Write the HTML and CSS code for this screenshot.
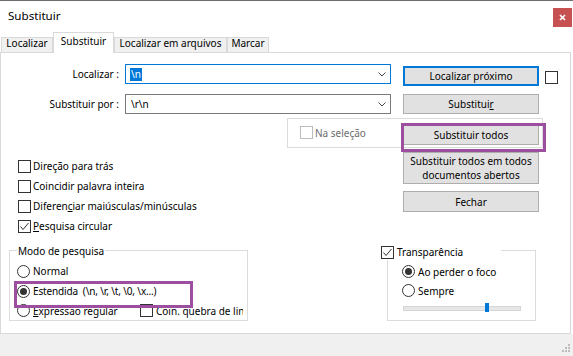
FILE: index.html
```html
<!DOCTYPE html>
<html lang="pt">
<head>
<meta charset="utf-8">
<title>Substituir</title>
<link rel="stylesheet" href="styles.css">
</head>
<body>
<div class="window">
  <div class="titlebar">
    <span class="title">Substituir</span>
    <span class="close"><svg width="7" height="7" viewBox="0 0 7 7"><path d="M1 1L6 6M6 1L1 6" stroke="#fff" stroke-width="1.7"/></svg></span>
  </div>
  <div class="tabs">
    <div class="tab t1">Localizar</div>
    <div class="tab t2 active">Substituir</div>
    <div class="tab t3">Localizar em arquivos</div>
    <div class="tab t4">Marcar</div>
  </div>
  <div class="panel">
    <div class="field-row first">
      <span class="field-label">Localizar :</span>
      <div class="combo focus"><span class="combo-text"><span class="sel">\n</span></span><svg class="chev" width="8" height="5" viewBox="0 0 8 5"><polyline points="0.5,0.5 4,4 7.5,0.5" fill="none" stroke="#444" stroke-width="1"/></svg></div>
      <div class="btn default">Localizar próximo</div>
      <span class="check side"></span>
    </div>
    <div class="field-row second">
      <span class="field-label">Substituir por :</span>
      <div class="combo"><span class="combo-text">\r\n</span><svg class="chev" width="8" height="5" viewBox="0 0 8 5"><polyline points="0.5,0.5 4,4 7.5,0.5" fill="none" stroke="#444" stroke-width="1"/></svg></div>
      <div class="btn">Substitui<u>r</u></div>
    </div>
    <div class="scope">
      <span class="check disabled"></span>
      <span class="scope-label">Na seleção</span>
      <div class="btn marked">Substituir todos</div>
    </div>
    <div class="mid">
      <div class="options">
        <div class="opt"><span class="check"></span><span class="opt-text">Direção para trás</span></div>
        <div class="opt"><span class="check"></span><span class="opt-text">Coincidir palavra inteira</span></div>
        <div class="opt"><span class="check"></span><span class="opt-text">Diferen<u>c</u>iar maiúsculas/minúsculas</span></div>
        <div class="opt"><span class="check checked"><svg width="11" height="11" viewBox="0 0 11 11"><polyline points="1.5,5.5 4,8.5 9.5,2" fill="none" stroke="#333" stroke-width="1"/></svg></span><span class="opt-text"><u>P</u>esquisa circular</span></div>
      </div>
      <div class="actions">
        <div class="btn tall">Substituir todos em todos<br>documentos abertos</div>
        <div class="btn close-btn">Fechar</div>
      </div>
    </div>
    <div class="groups">
      <div class="group mode">
        <div class="legend">Modo de pesquisa</div>
        <div class="radio-row r1"><span class="radio"></span><span class="opt-text">Normal</span></div>
        <div class="radio-row r2 marked-row"><span class="radio on"></span><span class="opt-text ext">Estendida&nbsp; (\n, \r, \t, \0, \x...)</span></div>
        <div class="radio-row r3"><span class="radio-part"><span class="radio"></span><span class="opt-text"><u>E</u>xpressão regular</span></span><span class="check"></span><span class="opt-text">Coin. quebra de linha</span></div>
      </div>
      <div class="group transp">
        <div class="tlegend"><span class="check checked"><svg width="11" height="11" viewBox="0 0 11 11"><polyline points="1.5,5.5 4,8.5 9.5,2" fill="none" stroke="#333" stroke-width="1"/></svg></span><span class="opt-text">Transparência</span></div>
        <div class="radio-row t-r1"><span class="radio on"></span><span class="opt-text">Ao perder o foco</span></div>
        <div class="radio-row t-r2"><span class="radio"></span><span class="opt-text">Sempre</span></div>
        <div class="slider"><span class="thumb"></span></div>
      </div>
    </div>
  </div>
  <div class="footer">
    <svg class="grip" width="9" height="9" viewBox="0 0 9 9" fill="#bdbdbd"><rect x="6" y="0" width="2" height="2"/><rect x="3" y="3" width="2" height="2"/><rect x="6" y="3" width="2" height="2"/><rect x="0" y="6" width="2" height="2"/><rect x="3" y="6" width="2" height="2"/><rect x="6" y="6" width="2" height="2"/></svg>
  </div>
</div>
</body>
</html>
```

FILE: styles.css
```css
* { box-sizing: border-box; }
html, body { margin: 0; padding: 0; }
body {
  width: 573px;
  height: 356px;
  overflow: hidden;
  background: #fff;
  font-family: "Noto Sans", "Open Sans", sans-serif;
  font-size: 10px;
  color: #000;
}
u { text-decoration: underline; text-underline-offset: 1px; }
.window { display: flex; flex-direction: column; height: 356px; }

.titlebar {
  height: 32px;
  border-top: 1px solid #6e6e6e;
  display: flex;
  align-items: flex-start;
  justify-content: space-between;
}
.title { margin: 6px 0 0 8px; line-height: 18px; font-size: 11.6px; }
.close {
  margin: 7px 1px 0 0;
  width: 19px;
  height: 19px;
  background: #c75050;
  display: flex;
  align-items: center;
  justify-content: center;
}

.tabs {
  height: 20px;
  display: flex;
  align-items: flex-end;
  padding-left: 1px;
}
.tab {
  height: 15px;
  border: 1px solid #d9d9d9;
  border-bottom: 0;
  background: #f0f0f0;
  text-align: center;
  line-height: 11px;
  white-space: nowrap;
}
.tab.t1 { width: 52px; }
.tab.t2 { width: 61px; }
.tab.t3 { width: 113px; }
.tab.t4 { width: 42px; }
.tab.active {
  height: 21px;
  margin-bottom: -1px;
  background: #fff;
  line-height: 16px;
  position: relative;
  z-index: 1;
}

.panel {
  width: 571px;
  height: 282px;
  border: 1px solid #d9d9d9;
}

.field-row { display: flex; align-items: flex-start; height: 20px; }
.field-row.first { margin-top: 11px; }
.field-row.second { margin-top: 10px; }
.field-label {
  width: 118px;
  text-align: right;
  line-height: 20px;
  white-space: nowrap;
}
.combo {
  margin-left: 6px;
  width: 266px;
  height: 20px;
  border: 1px solid #7a7a7a;
  display: flex;
  align-items: center;
  justify-content: space-between;
  padding: 0 4px;
}
.combo.focus { border-color: #0078d7; }
.combo-text { line-height: 18px; white-space: nowrap; }
.second .combo-text { padding-left: 1px; }
.sel {
  display: inline-block;
  background: #0078d7;
  color: #fff;
  line-height: 13px;
  padding: 0 1px;
}

.btn {
  width: 136px;
  height: 20px;
  background: #e1e1e1;
  border: 1px solid #adadad;
  display: flex;
  align-items: center;
  justify-content: center;
  text-align: center;
  line-height: 14px;
  white-space: nowrap;
}
.field-row .btn { margin-left: 12px; }
.first .btn { margin-top: 2px; }
.btn.default { border: 2px solid #0078d7; }

.check {
  width: 13px;
  height: 13px;
  border: 1px solid #333;
  background: #fff;
  flex: none;
  display: flex;
  align-items: center;
  justify-content: center;
}
.check.side { margin: 7px 0 0 6px; }
.check.disabled { border-color: #bcbcbc; }

.scope {
  margin: 4px 0 0 286px;
  width: 256px;
  height: 30px;
  border: 1px solid #dcdcdc;
  display: flex;
  align-items: flex-start;
}
.scope .check { margin: 7px 0 0 12px; }
.scope-label { margin: 4px 0 0 2px; line-height: 20px; color: #6d6d6d; }
.btn.marked {
  margin: 5px 3px 0 auto;
  height: 21px;
  position: relative;
}
.btn.marked::after {
  content: "";
  position: absolute;
  left: -3px;
  top: -2px;
  width: 139px;
  height: 23px;
  border: 3px solid #9c4f9f;
}

.mid { display: flex; }
.options { width: 402px; padding: 8px 0 0 17px; }
.opt { display: flex; align-items: center; height: 20px; }
.opt-text { margin-left: 2px; line-height: 20px; white-space: nowrap; }
.actions { width: 136px; padding-top: 4px; }
.btn.tall { height: 32px; }
.btn.close-btn { margin-top: 7px; height: 21px; }

.groups { display: flex; margin-top: 14px; padding-left: 8px; gap: 139px; }
.group {
  height: 71px;
  border: 1px solid #dcdcdc;
}
.group.mode { width: 239px; }
.group.transp { width: 149px; }
.legend {
  width: fit-content;
  margin: -8px 0 0 7px;
  padding: 0 1px;
  background: #fff;
  line-height: 16px;
}
.radio-row { display: flex; align-items: center; height: 20px; margin-left: 7px; }
.mode .r1 { margin-top: 2px; }
.mode .r3 { height: 19px; margin-right: 4px; overflow: hidden; }
.radio-part { display: flex; align-items: center; width: 123px; flex: none; }
.radio {
  width: 13px;
  height: 13px;
  border: 1px solid #333;
  border-radius: 50%;
  background: #fff;
  flex: none;
  display: flex;
  align-items: center;
  justify-content: center;
}
.radio-row .opt-text { margin-left: 3px; }
.radio-row .opt-text.ext { letter-spacing: -0.15px; }
.radio.on::before {
  content: "";
  width: 7px;
  height: 7px;
  border-radius: 50%;
  background: #333;
}
.marked-row { position: relative; }
.marked-row::after {
  content: "";
  position: absolute;
  left: -3px;
  top: 0;
  width: 173px;
  height: 21px;
  border: 3px solid #9c4f9f;
}

.tlegend {
  display: flex;
  align-items: center;
  width: 120px;
  height: 16px;
  margin: -7px 0 0 -7px;
  background: #fff;
}
.tlegend .opt-text { margin-left: 3px; line-height: 16px; }
.transp .radio-row { margin-left: 14px; height: 19px; }
.transp .t-r1 { margin-top: 2px; }
.slider {
  position: relative;
  margin: 6px 0 0 15px;
  width: 118px;
  height: 5px;
  border: 1px solid #d6d6d6;
  background: #e7e7e7;
}
.thumb {
  position: absolute;
  left: 81px;
  top: -4px;
  width: 4px;
  height: 9px;
  background: #0078d7;
}

.footer {
  flex: 1;
  background: #f0f0f0;
  display: flex;
  align-items: flex-end;
  justify-content: flex-end;
  padding: 0 2px 3px 0;
}
```
